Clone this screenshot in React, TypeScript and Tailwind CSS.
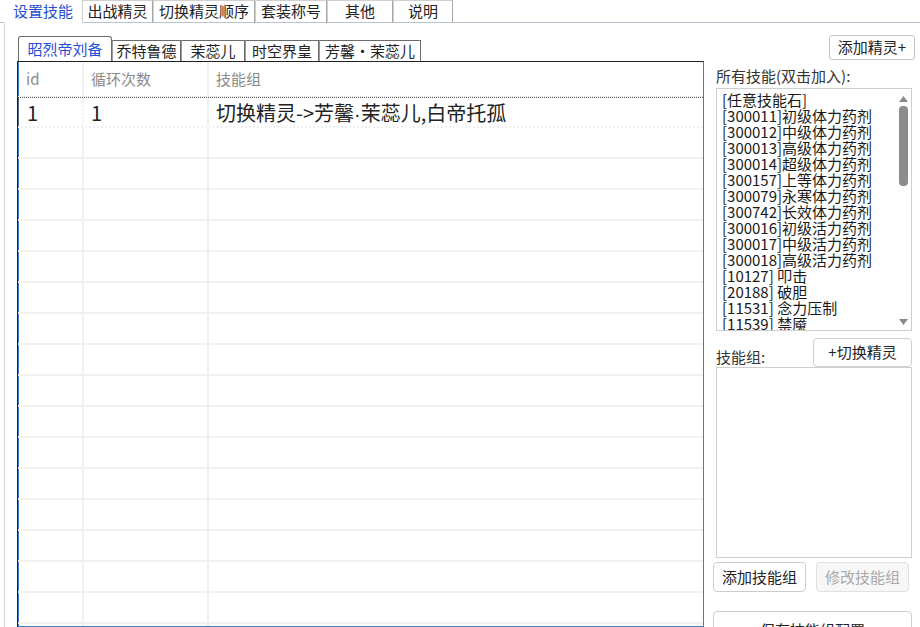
import React from "react";

const font = { fontFamily: '"Noto Sans CJK SC", "Noto Sans", sans-serif' };

const topTabs = ["出战精灵", "切换精灵顺序", "套装称号", "其他", "说明"];
const topTabW = ["w-[71px]", "w-[102px]", "w-[72px]", "w-[66px]", "w-[60px]"];

const spiritTabs = [
  { name: "乔特鲁德", w: "w-[69px]" },
  { name: "茉蕊儿", w: "w-[64px]" },
  { name: "时空界皇", w: "w-[74px]" },
  { name: "芳馨·茉蕊儿", w: "w-[102px]" },
];

const skills = [
  "[任意技能石]",
  "[300011]初级体力药剂",
  "[300012]中级体力药剂",
  "[300013]高级体力药剂",
  "[300014]超级体力药剂",
  "[300157]上等体力药剂",
  "[300079]永寒体力药剂",
  "[300742]长效体力药剂",
  "[300016]初级活力药剂",
  "[300017]中级活力药剂",
  "[300018]高级活力药剂",
  "[10127] 叩击",
  "[20188] 破胆",
  "[11531] 念力压制",
  "[11539] 禁魇",
];

const emptyRows = Array.from({ length: 17 });

export default function App() {
  return (
    <div className="w-[920px] h-[627px] overflow-hidden bg-white flex flex-col text-[#222]" style={font}>
      {/* top tabs */}
      <div className="flex h-[23px] shrink-0">
        <div className="w-[4px] border-b border-[#b9c4cf]" />
        <div className="w-[78px] h-[23px] flex items-center justify-center text-[15px] text-[#1f4fd6]">设置技能</div>
        {topTabs.map((t, i) => (
          <div
            key={t}
            className={`${topTabW[i]} h-[23px] flex items-center justify-center text-[15px] border border-[#cfcfcf] border-r-[#a8a8a8] border-b-[#b9c4cf] bg-white`}
          >
            {t}
          </div>
        ))}
        <div className="flex-1 border-b border-[#b9c4cf]" />
      </div>

      <div className="flex-1 ml-[4px] border-l border-[#cfd6dd] flex flex-col min-h-0">
        {/* spirit tabs */}
        <div className="flex items-end h-[38px] pl-[13px] pr-[5px] shrink-0">
          <div className="w-[94px] h-[25px] flex items-center justify-center text-[15px] text-[#1f4fd6] border border-b-0 border-[#6b6b6b] rounded-t-[3px] bg-white">
            昭烈帝刘备
          </div>
          {spiritTabs.map((t) => (
            <div
              key={t.name}
              className={`${t.w} h-[21px] flex items-center justify-center text-[15px] border border-b-0 border-[#6b6b6b] border-l-[#9a9a9a] bg-white`}
            >
              {t.name}
            </div>
          ))}
          <div className="flex-1" />
          <div className="w-[86px] h-[25px] mb-[1px] flex items-center justify-center text-[15px] border border-[#c4c4c4] rounded-[3px]">
            添加精灵+
          </div>
        </div>

        <div className="flex flex-1 min-h-0">
          {/* data grid */}
          <div className="ml-[12px] w-[687px] border border-[#1f1f1f] border-r-[#3a80c8] border-b-[#3a80c8] shadow-[inset_1px_0_0_#3a80c8] overflow-hidden">
            <div className="flex h-[35px] border-b border-[#ececec] text-[15px] text-[#8a8a8a]">
              <div className="w-[66px] pl-[8px] pt-[6px] border-r-2 border-[#f0f0f0]">id</div>
              <div className="w-[125px] pl-[7px] pt-[6px] border-r-2 border-[#f0f0f0]">循环次数</div>
              <div className="flex-1 pl-[7px] pt-[6px]">技能组</div>
            </div>
            <div className="flex h-[31px] border-b-2 border-[#f0f0f0] text-[20px] text-[#222] border-t border-t-[#555] border-dotted">
              <div className="w-[66px] pl-[8px] leading-[30px] border-r-2 border-r-[#f0f0f0] border-l border-l-[#555] border-dotted">1</div>
              <div className="w-[125px] pl-[7px] leading-[30px] border-r-2 border-r-[#f0f0f0]">1</div>
              <div className="flex-1 pl-[7px] leading-[30px] whitespace-nowrap">
                切换精灵-&gt;芳馨<span className="font-['Liberation_Sans']">·</span>茉蕊儿,白帝托孤
              </div>
            </div>
            {emptyRows.map((_, i) => (
              <div key={i} className="flex h-[31px] border-b-2 border-[#f0f0f0]">
                <div className="w-[66px] border-r-2 border-[#f0f0f0]" />
                <div className="w-[125px] border-r-2 border-[#f0f0f0]" />
                <div className="flex-1" />
              </div>
            ))}
          </div>

          {/* right side */}
          <div className="flex-1 pl-[9px] pr-[8px] flex flex-col min-h-0">
            <div className="shrink-0 pl-[3px] pt-[5px] h-[27px] text-[15px] text-[#333] leading-[20px]">所有技能(双击加入):</div>
            <div className="shrink-0 ml-[3px] w-[196px] h-[243px] border border-[#cfcfcf] flex overflow-hidden">
              <div className="flex-1 pl-[5px] pt-[3px] text-[15px] leading-[16px] text-[#1a1a1a] whitespace-nowrap overflow-hidden">
                {skills.map((s) => (
                  <div key={s} className="h-[16px]">{s}</div>
                ))}
              </div>
              <div className="w-[16px] flex flex-col items-center pt-[7px] pb-[5px]">
                <svg width="9" height="6" viewBox="0 0 9 6">
                  <path d="M0 6 L4.5 0 L9 6 Z" fill="#8a8a8a" />
                </svg>
                <div className="mt-[4px] w-[9px] h-[80px] rounded-[4px] bg-[#8c8c8c]" />
                <div className="flex-1" />
                <svg width="9" height="6" viewBox="0 0 9 6">
                  <path d="M0 0 L9 0 L4.5 6 Z" fill="#8a8a8a" />
                </svg>
              </div>
            </div>
            <div className="shrink-0 flex items-end justify-between mt-[7px] h-[29px]">
              <div className="pl-[3px] text-[15px] text-[#333] leading-[20px]">技能组:</div>
              <div className="w-[99px] h-[29px] flex items-center justify-center text-[15px] border border-[#d0d0d0] rounded-[4px]">
                +切换精灵
              </div>
            </div>
            <div className="shrink-0 ml-[3px] w-[196px] h-[191px] border border-[#cfcfcf]" />
            <div className="shrink-0 flex justify-between mt-[4px] pr-[3px]">
              <div className="w-[93px] h-[30px] flex items-center justify-center text-[15px] border border-[#cccccc] rounded-[4px]">
                添加技能组
              </div>
              <div className="w-[93px] h-[30px] flex items-center justify-center text-[15px] text-[#a8a8a8] border border-[#e0e0e0] bg-[#f7f7f7] rounded-[4px]">
                修改技能组
              </div>
            </div>
            <div className="shrink-0 mt-[19px] h-[30px] border border-[#cccccc] rounded-[4px] flex justify-center pt-[7px] text-[15px] overflow-hidden">
              保存技能组配置
            </div>
          </div>
        </div>
      </div>
    </div>
  );
}
